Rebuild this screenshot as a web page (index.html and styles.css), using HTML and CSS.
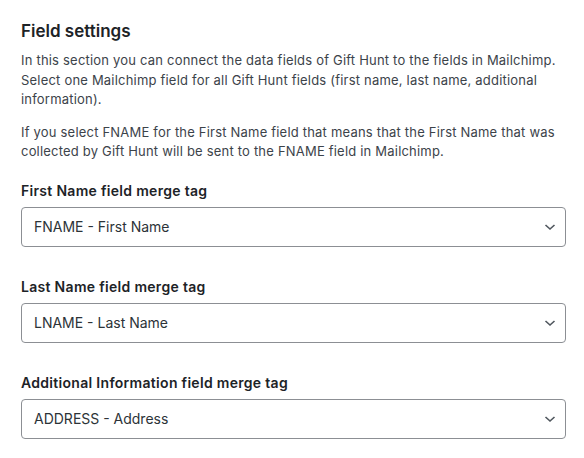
FILE: index.html
```html
<!DOCTYPE html>
<html lang="en">
<head>
<meta charset="utf-8">
<title>Field settings</title>
<link rel="stylesheet" href="styles.css">
</head>
<body>
<div class="panel">
  <h2 class="title">Field settings</h2>
  <p class="desc">In this section you can connect the data fields of Gift Hunt to the fields in Mailchimp. Select one Mailchimp field for all Gift Hunt fields (first name, last name, additional information).</p>
  <p class="desc">If you select FNAME for the First Name field that means that the First Name that was collected by Gift Hunt will be sent to the FNAME field in Mailchimp.</p>

  <div class="field">
    <label class="label" for="f1">First Name field merge tag</label>
    <div class="select-wrap">
      <select class="select" id="f1"><option>FNAME - First Name</option></select>
      <svg class="chev" width="16" height="16" viewBox="0 0 16 16"><polyline points="3.5,6 8,10 12.5,6" fill="none" stroke="#50575e" stroke-width="1.6"/></svg>
    </div>
  </div>

  <div class="field">
    <label class="label" for="f2">Last Name field merge tag</label>
    <div class="select-wrap">
      <select class="select" id="f2"><option>LNAME - Last Name</option></select>
      <svg class="chev" width="16" height="16" viewBox="0 0 16 16"><polyline points="3.5,6 8,10 12.5,6" fill="none" stroke="#50575e" stroke-width="1.6"/></svg>
    </div>
  </div>

  <div class="field">
    <label class="label" for="f3">Additional Information field merge tag</label>
    <div class="select-wrap">
      <select class="select" id="f3"><option>ADDRESS - Address</option></select>
      <svg class="chev" width="16" height="16" viewBox="0 0 16 16"><polyline points="3.5,6 8,10 12.5,6" fill="none" stroke="#50575e" stroke-width="1.6"/></svg>
    </div>
  </div>
</div>
</body>
</html>
```

FILE: styles.css
```css
html, body {
  margin: 0;
  padding: 0;
  background: #ffffff;
}
body {
  font-family: Inter, "Noto Sans", sans-serif;
  color: #3c434a;
  font-size: 13px;
  line-height: 1.5;
}
.panel {
  padding: 19px 18px 0 21px;
}
.title {
  margin: 0 0 8px;
  font-size: 17px;
  line-height: 24px;
  font-weight: 600;
  color: #1d2327;
}
.desc {
  margin: 0 0 13px;
  font-size: 13px;
  line-height: 19.5px;
  letter-spacing: 0.2px;
}
.field {
  margin-top: 19px;
  margin-bottom: 30px;
}
.label {
  display: block;
  font-size: 14px;
  line-height: 20px;
  font-weight: 600;
  letter-spacing: 0.3px;
  color: #1d2327;
  margin-bottom: 6px;
}
.select-wrap {
  position: relative;
}
.select {
  display: block;
  width: 100%;
  height: 40px;
  box-sizing: border-box;
  appearance: none;
  -webkit-appearance: none;
  border: 1px solid #8c8f94;
  border-radius: 4px;
  background: #fff;
  padding: 0 32px 0 12px;
  font-family: Inter, "Noto Sans", sans-serif;
  font-size: 14px;
  color: #2c3338;
  margin: 0;
}
.chev {
  position: absolute;
  right: 8px;
  top: 12px;
  pointer-events: none;
}
```
